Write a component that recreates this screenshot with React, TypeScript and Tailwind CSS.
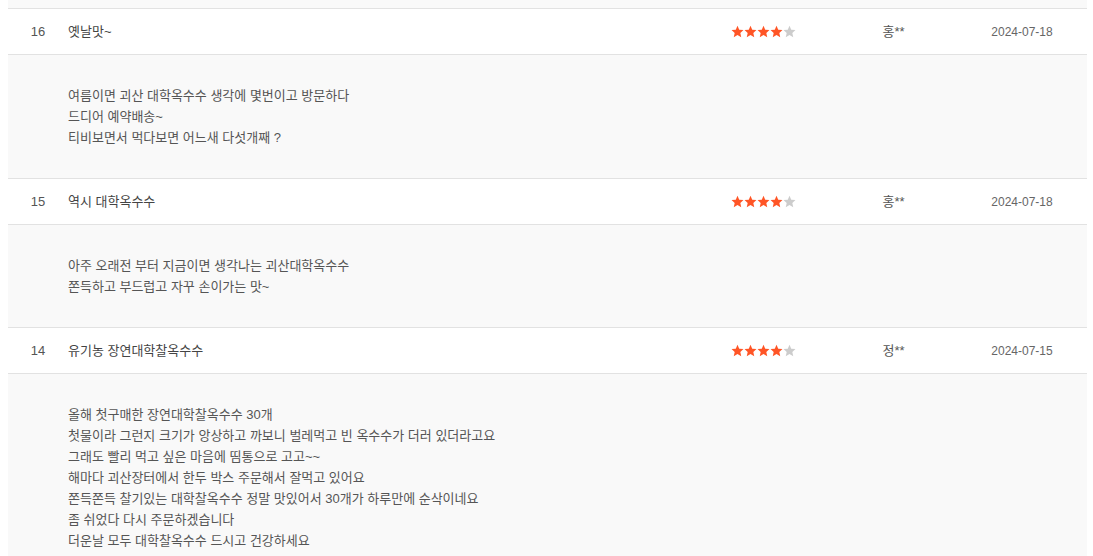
import React from "react";

interface Review {
  no: number;
  title: string;
  rating: number;
  name: string;
  date: string;
  body: string[];
}

const reviews: Review[] = [
  {
    no: 16,
    title: "옛날맛~",
    rating: 4,
    name: "홍**",
    date: "2024-07-18",
    body: [
      "여름이면 괴산 대학옥수수 생각에 몇번이고 방문하다",
      "드디어 예약배송~",
      "티비보면서 먹다보면 어느새 다섯개째 ?",
    ],
  },
  {
    no: 15,
    title: "역시 대학옥수수",
    rating: 4,
    name: "홍**",
    date: "2024-07-18",
    body: [
      "아주 오래전 부터 지금이면 생각나는 괴산대학옥수수",
      "쫀득하고 부드럽고 자꾸 손이가는 맛~",
    ],
  },
  {
    no: 14,
    title: "유기농 장연대학찰옥수수",
    rating: 4,
    name: "정**",
    date: "2024-07-15",
    body: [
      "올해 첫구매한 장연대학찰옥수수 30개",
      "첫물이라 그런지 크기가 앙상하고 까보니 벌레먹고 빈 옥수수가 더러 있더라고요",
      "그래도 빨리 먹고 싶은 마음에 띰통으로 고고~~",
      "해마다 괴산장터에서 한두 박스 주문해서 잘먹고 있어요",
      "쫀득쫀득 찰기있는 대학찰옥수수 정말 맛있어서 30개가 하루만에 순삭이네요",
      "좀 쉬었다 다시 주문하겠습니다",
      "더운날 모두 대학찰옥수수 드시고 건강하세요",
    ],
  },
];

function Star({ on }: { on: boolean }) {
  return (
    <svg width="13" height="13" viewBox="0 0 24 24" className={on ? "fill-[#ff5526]" : "fill-[#cccccc]"}>
      <path d="M12 1.5l3.2 7.1 7.8.8-5.8 5.3 1.7 7.7L12 18.5l-6.9 3.9 1.7-7.7L1 9.4l7.8-.8z" />
    </svg>
  );
}

function ReviewRow({ review }: { review: Review }) {
  return (
    <>
      <div className="grid grid-cols-[60px_628px_134px_127px_130px] h-[46px] items-center border-b border-[#e2e2e2] bg-white text-[13px]">
        <span className="text-center text-[#555]">{review.no}</span>
        <span className="text-[#444]">{review.title}</span>
        <span className="flex justify-center">
          {[0, 1, 2, 3, 4].map((i) => (
            <Star key={i} on={i < review.rating} />
          ))}
        </span>
        <span className="text-center text-[#555]">{review.name}</span>
        <span className="text-center text-[12px] text-[#666]">{review.date}</span>
      </div>
      <div className="bg-[#f9f9f9] border-b border-[#e2e2e2] pl-[60px] py-[30px] text-[13px] leading-[21px] text-[#555]">
        {review.body.map((line, i) => (
          <p key={i}>{line}</p>
        ))}
      </div>
    </>
  );
}

export default function App() {
  return (
    <div
      className="bg-white min-h-screen"
      style={{ fontFamily: '"Liberation Sans", "Noto Sans CJK KR", sans-serif' }}
    >
      <div className="ml-2 w-[1079px]">
        {/* tail of the previous review */}
        <div className="h-2 bg-[#f9f9f9] border-b border-[#e2e2e2] box-content" />
        {reviews.map((r) => (
          <ReviewRow key={r.no} review={r} />
        ))}
      </div>
    </div>
  );
}
